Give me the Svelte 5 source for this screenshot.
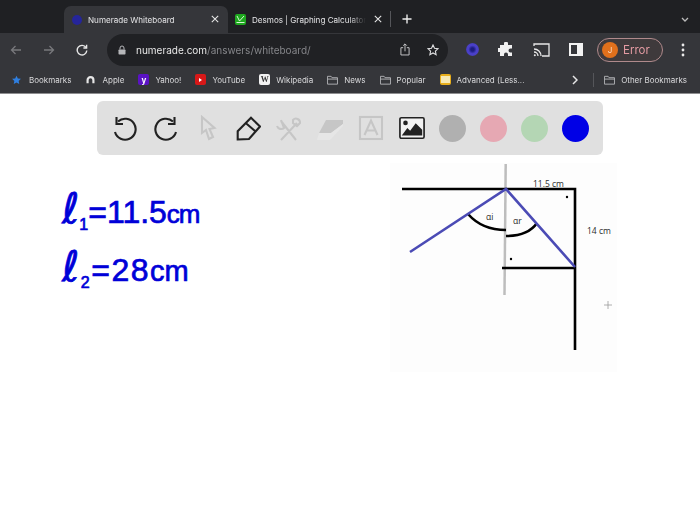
<script>
  const bookmarks = [
    { label: 'Bookmarks', icon: 'star' },
    { label: 'Apple', icon: 'apple' },
    { label: 'Yahoo!', icon: 'yahoo' },
    { label: 'YouTube', icon: 'yt' },
    { label: 'Wikipedia', icon: 'wiki' },
    { label: 'News', icon: 'folder' },
    { label: 'Popular', icon: 'folder' },
    { label: 'Advanced (Less...', icon: 'note' }
  ];
  const colors = ['#b0b0b0', '#e6a8b3', '#b4d6b4', '#0000e6'];
</script>

<div class="page">
  <header class="chrome">
    <div class="tabstrip">
      <div class="tab active">
        <span class="fav navy"></span>
        <span class="title">Numerade Whiteboard</span>
        <svg class="x" viewBox="0 0 10 10"><path d="M1 1l8 8M9 1l-8 8"/></svg>
      </div>
      <div class="tab second">
        <span class="fav green"><svg viewBox="0 0 11 11"><path d="M2 2l2.500 5L9 2M1.500 8.500h8" fill="none" stroke="#d8f5d8" stroke-width="1"/></svg></span>
        <span class="title fade">Desmos | Graphing Calculator</span>
        <svg class="x" viewBox="0 0 10 10"><path d="M1 1l8 8M9 1l-8 8"/></svg>
      </div>
      <span class="tabdiv"></span>
      <svg class="plus" viewBox="0 0 11 11"><path d="M5.500 .5v10M.5 5.500h10"/></svg>
      <svg class="chev" viewBox="0 0 8 5"><path d="M1 1l3 3 3-3"/></svg>
    </div>

    <div class="toolbar">
      <svg class="nav dim" viewBox="0 0 12 12"><path d="M11 6H1.500M5.500 2L1.500 6l4 4"/></svg>
      <svg class="nav dim fwd" viewBox="0 0 12 12"><path d="M1 6h9.500M6.500 2l4 4-4 4"/></svg>
      <svg class="nav rel" viewBox="0 0 12 12"><path d="M10 3.500A4.800 4.800 0 1 0 10.800 6.500"/><path d="M10.600 .8v3.200H7.400" /></svg>
      <div class="omni">
        <svg class="lock" viewBox="0 0 8 10"><path d="M2 4.500V3a2 2 0 0 1 4 0v1.500" fill="none" stroke="#b6b7ba"/><rect x=".5" y="4.500" width="7" height="5" rx=".7" fill="#b6b7ba"/></svg>
        <span class="url">numerade.com<span class="path">/answers/whiteboard/</span></span>
        <span class="grow"></span>
        <svg class="share" viewBox="0 0 11 14"><path d="M3.500 5H1v8h9V5H7.500M5.500 9V1M3.500 2.800l2-2 2 2"/></svg>
        <svg class="ostar" viewBox="0 0 12 12"><path d="M6 1l1.500 3.300 3.500.4-2.600 2.400.7 3.600L6 8.900l-3.100 1.800.7-3.600L1 4.700l3.500-.4z"/></svg>
      </div>
      <span class="ext"></span>
      <svg class="puzzle" viewBox="0 0 16 16"><path fill="#f1f1f1" d="M6 1.500a2 2 0 0 1 4 0V3h4v3.500h-1.500a2 2 0 0 0 0 4H14V14H10v-1.500a2 2 0 0 0-4 0V14H2v-4H.8a2 2 0 0 1 0-4H2V3h4z"/></svg>
      <svg class="cast" viewBox="0 0 17 14"><path d="M1 3V1h15v12H9M1 6a7 7 0 0 1 7 7M1 9a4 4 0 0 1 4 4"/><circle cx="1.800" cy="12.200" r="1" fill="#e8e8e8" stroke="none"/></svg>
      <span class="panelicon"><span></span></span>
      <div class="profile"><span class="avatar">J</span><span class="err">Error</span></div>
      <svg class="dots" viewBox="0 0 4 14"><circle cx="2" cy="2" r="1.400"/><circle cx="2" cy="7" r="1.400"/><circle cx="2" cy="12" r="1.400"/></svg>
    </div>

    <div class="bookmarks">
      {#each bookmarks as b}
        <div class="bm">
          {#if b.icon === 'star'}
            <svg class="bi" viewBox="0 0 12 12"><path fill="#2f7fe0" d="M6 .8l1.600 3.400 3.700.4-2.700 2.500.7 3.700L6 9l-3.300 1.800.7-3.700L.7 4.600l3.700-.4z"/></svg>
          {:else if b.icon === 'apple'}
            <svg class="bi" viewBox="0 0 12 12"><path fill="none" stroke="#e6e6e6" stroke-width="2.600" d="M2.500 10V6a3.500 3.500 0 0 1 7 0v4"/></svg>
          {:else if b.icon === 'yahoo'}
            <span class="bi tile purple">y</span>
          {:else if b.icon === 'yt'}
            <span class="bi tile red"><i></i></span>
          {:else if b.icon === 'wiki'}
            <span class="bi tile white">W</span>
          {:else if b.icon === 'note'}
            <span class="bi tile yellow"><i></i></span>
          {:else}
            <svg class="bi" viewBox="0 0 12 10"><path fill="none" stroke="#b4b5b8" d="M.5 9.500V1h4l1 1.500h6v7zM.5 4h11"/></svg>
          {/if}
          <span>{b.label}</span>
        </div>
      {/each}
      <span class="grow"></span>
      <svg class="more" viewBox="0 0 6 10"><path d="M1 1l4 4-4 4"/></svg>
      <span class="bmdiv"></span>
      <div class="bm last">
        <svg class="bi" viewBox="0 0 12 10"><path fill="none" stroke="#b4b5b8" d="M.5 9.500V1h4l1 1.500h6v7zM.5 4h11"/></svg>
        <span>Other Bookmarks</span>
      </div>
    </div>
  </header>

  <main class="board">
    <div class="tools">
      <button aria-label="Undo"><svg viewBox="0 0 26 26"><path d="M3 17A10.500 10.500 0 1 0 6 6.500"/><path d="M4.500 2V9H11"/></svg></button>
      <button aria-label="Redo"><svg viewBox="0 0 26 26"><path d="M23 17A10.500 10.500 0 1 1 20 6.500"/><path d="M21.500 2V9H15"/></svg></button>
      <button class="off" aria-label="Select"><svg viewBox="0 0 26 26"><path d="M8 2V18L12 15L15 24L19 22L15.500 14L20.500 13Z"/></svg></button>
      <button aria-label="Pencil"><svg viewBox="0 0 26 26"><path d="M2.700 24.500L14 24L25 11.500L16 2.800L2.700 16.200ZM11 8.200L20.300 16.200"/></svg></button>
      <button class="off" aria-label="Tools"><svg viewBox="0 0 26 26"><path d="M5 25L21 8M5 6L20 25M1 11c1 3 5 4 7 2L5 5M17 5a4 4 0 0 1 7 3l-3 3-4-3z"/></svg></button>
      <button class="off" aria-label="Eraser"><svg class="eraser" viewBox="0 0 28 26"><path d="M10 5H27V9L15 18H3z" fill="#c6c6c6"/><path d="M3 18H15L27 9V11L14 25H1z" fill="#e6e6e6"/></svg></button>
      <button class="off" aria-label="Text"><svg viewBox="0 0 26 26"><rect x="2" y="2" width="22" height="22"/><path d="M6.500 20L13 5.500 19.500 20M9 15.500h8"/></svg></button>
      <button aria-label="Image"><svg viewBox="0 0 28 24"><rect x="1" y="1" width="26" height="22" rx="1.500" fill="#f2f2f2" stroke-width="1.800"/><circle cx="7" cy="6.500" r="2.500" fill="#222" stroke="none"/><path d="M3 20l6-8 3 3 6-8 7 7v6z" fill="#222" stroke="none"/></svg></button>
      {#each colors as c}
        <span class="swatch"><span class="dot" style="background:{c}"></span></span>
      {/each}
    </div>

    <svg class="sheet" viewBox="0 0 700 413" aria-label="Diagram">
      <g transform="translate(0,-94)">
        <rect x="390" y="163" width="227" height="209" fill="#fdfdfd"/>
        <path d="M505.700 164L504.500 295" stroke="#bdbdbd" stroke-width="2.500" fill="none"/>
        <g stroke="#000" stroke-width="2.600" fill="none">
          <path d="M402 189H575V350"/>
          <path d="M502 268H575"/>
          <path d="M468 214Q482 230 506 230"/>
          <path d="M506 236Q528 236 537 223"/>
        </g>
        <path d="M410 252L506 189L575 267" stroke="#4b4bb5" stroke-width="2.600" fill="none"/>
        <circle cx="567" cy="197" r="1.200"/>
        <circle cx="511" cy="259" r="1.200"/>
        <path d="M604 305H612M608 301V309" stroke="#999" stroke-width=".8"/>
        <g class="label">
          <text x="533" y="187">11.5 cm</text>
          <text x="587" y="234">14 cm</text>
          <text x="486" y="220">αi</text>
          <text x="513" y="224">αr</text>
        </g>
      </g>
    </svg>

    <div class="ink one"><span class="ell">ℓ</span><sub>1</sub>=11.5<span class="unit">cm</span></div>
    <div class="ink two"><span class="ell">ℓ</span><sub>2</sub>=28<span class="unit">cm</span></div>
  </main>
</div>

<style>
  :global(body) { margin: 0; background: #fff; }
  .page { width: 700px; height: 507px; overflow: hidden; display: flex; flex-direction: column; font-family: Inter, "Liberation Sans", sans-serif; }
  .chrome { flex: none; height: 94px; color: #e4e4e6; display: flex; flex-direction: column; filter: blur(.3px); }
  svg { display: block; flex: none; }
  .grow { flex: 1; }

  .tabstrip { height: 33px; background: #1f2023; display: flex; align-items: flex-end; padding-left: 64px; box-sizing: border-box; position: relative; }
  .tab { height: 27px; display: flex; align-items: center; box-sizing: border-box; font-size: 8.100px; }
  .tab.active { width: 164px; background: #35363a; border-radius: 7px 7px 0 0; padding: 0 9px 0 8px; }
  .tab.second { width: 162px; padding: 0 8px 0 7px; }
  .fav { width: 11px; height: 11px; flex: none; border-radius: 2px; margin-right: 6px; }
  .active .fav { margin-right: 5px; width: 10px; height: 10px; border-radius: 50%; }
  .navy { background: #25259a; }
  .green { background: #1fa81f; }
  .title { flex: 1; white-space: nowrap; overflow: hidden; }
  .active .title { padding-left: 1px; }
  .fade { -webkit-mask-image: linear-gradient(90deg, #000 85%, transparent); mask-image: linear-gradient(90deg, #000 85%, transparent); }
  .x { width: 8px; height: 8px; stroke: #e8e8e8; stroke-width: 1.300; fill: none; margin-left: 8px; }
  .tab .x { margin-bottom: 1px; }
  .tabdiv { width: 1px; height: 16px; background: #55565a; margin: 0 0 6px 0; }
  .plus { width: 10px; height: 10px; stroke: #eee; stroke-width: 1.500; margin: 0 0 9px 11px; }
  .chev { position: absolute; right: 11px; top: 17px; width: 8px; height: 5px; fill: none; stroke: #bbb; stroke-width: 1.300; }

  .toolbar { height: 33px; background: #35363a; display: flex; align-items: center; padding-left: 10px; box-sizing: border-box; }
  .nav { width: 12px; height: 12px; fill: none; stroke: #e2e2e2; stroke-width: 1.300; }
  .nav.dim { stroke: #78797c; }
  .fwd { margin-left: 21px; }
  .rel { margin-left: 21px; stroke: #e8e8e8; stroke-width: 1.400; }
  .omni { width: 341px; height: 32px; margin-left: 19px; background: #202124; border-radius: 16px; display: flex; align-items: center; padding: 0 9px 0 11px; box-sizing: border-box; }
  .lock { width: 8px; height: 10px; }
  .url { margin-left: 10px; font-size: 10px; color: #e8e8e8; }
  .path { color: #85868a; }
  .share { width: 10px; height: 13px; fill: none; stroke: #d0d0d2; stroke-width: 1; margin-right: 17px; }
  .ostar { width: 12px; height: 12px; fill: none; stroke: #e0e0e2; stroke-width: 1.100; }
  .ext { width: 13px; height: 13px; border-radius: 50%; background: radial-gradient(circle, #1c1c80 0 18%, #4a40c8 45%, #4a40c8 62%, #35363a 100%); margin-left: 18px; flex: none; }
  .puzzle { width: 16px; height: 16px; margin-left: 19px; }
  .cast { width: 17px; height: 14px; margin-left: 19px; fill: none; stroke: #e8e8e8; stroke-width: 1.300; }
  .panelicon { width: 14px; height: 13px; margin-left: 19px; background: #f2f2f2; padding: 2px 6px 2px 2px; box-sizing: border-box; flex: none; }
  .panelicon span { display: block; width: 100%; height: 100%; background: #35363a; }
  .profile { width: 66px; height: 24px; margin-left: 14px; box-sizing: border-box; border: 1px solid #b08a8c; border-radius: 12px; display: flex; align-items: center; padding-left: 4px; background: #3f3a3c; flex: none; }
  .avatar { width: 16px; height: 16px; border-radius: 50%; background: #e0701c; color: #f7d9c0; font-size: 8px; display: flex; align-items: center; justify-content: center; }
  .err { margin-left: 5px; color: #e39aa2; font-size: 11.500px; }
  .dots { width: 4px; height: 14px; margin-left: 18px; fill: #eaeaea; }

  .bookmarks { height: 28px; background: #35363a; border-bottom: 1px solid #8e8e90; box-sizing: border-box; display: flex; align-items: center; padding: 0 13px 0 11px; font-size: 8px; color: #dadadc; }
  .bm { display: flex; align-items: center; white-space: nowrap; margin-right: 14px; }
  .bi { width: 11px; height: 10px; margin-right: 6px; flex: none; }
  .bm:first-child .bi { margin-right: 7px; }
  .tile { display: flex; align-items: center; justify-content: center; border-radius: 2px; height: 11px; width: 11px; font-size: 8px; font-weight: 700; box-sizing: border-box; }
  .purple { background: #5a12c4; color: #fff; }
  .red { background: #d81818; }
  .red i { border-left: 3px solid #fff; border-top: 2px solid transparent; border-bottom: 2px solid transparent; }
  .white { background: #f2f2f2; color: #333; font-family: "Liberation Serif", serif; }
  .yellow { background: #e8ae1c; padding: 2px 1px; }
  .yellow i { display: block; width: 100%; height: 100%; background: #f7e9b5; }
  .more { width: 6px; height: 10px; fill: none; stroke: #e6e6e6; stroke-width: 1.500; margin-right: 15px; }
  .bmdiv { width: 1px; height: 14px; background: #55565a; margin-right: 10px; }
  .bm.last { margin-right: 0; }

  .board { flex: 1; position: relative; background: #fff; }
  .tools { position: relative; z-index: 1; margin: 7px 0 0 97px; width: 506px; height: 54px; padding: 0 7px; box-sizing: border-box; background: #e0e0e0; border-radius: 6px; display: flex; align-items: center; filter: blur(.3px); }
  .tools button { width: 41px; height: 41px; padding: 0; border: 0; background: none; display: flex; align-items: center; justify-content: center; }
  .tools svg { width: 26px; height: 26px; fill: none; stroke: #222; stroke-width: 2.100; }
  .tools button.off svg { stroke: #c6c6c6; }
  .tools button.off svg.eraser { width: 28px; stroke: none; }
  .swatch { width: 41px; height: 41px; display: flex; align-items: center; justify-content: center; flex: none; }
  .dot { width: 27px; height: 27px; border-radius: 50%; }

  .sheet { position: absolute; left: 0; top: 0; width: 700px; height: 413px; }
  .label text { font-family: "Open Sans", "Liberation Sans", sans-serif; font-size: 8.500px; fill: #2a2a2a; }

  .ink { position: absolute; color: #0000d8; font-family: "Liberation Sans", sans-serif; font-size: 32px; line-height: 1; white-space: nowrap; -webkit-text-stroke: .7px #0000d8; }
  .ell { font-size: 42px; font-family: "DejaVu Sans", sans-serif; }
  .ink sub { font-size: 16px; }
  .unit { font-size: 26px; letter-spacing: -1px; }
  .one { left: 62px; top: 94px; }
  .two { left: 62px; top: 152px; letter-spacing: 1.500px; }
  .two .unit { font-size: 29px; letter-spacing: 0; }
</style>
